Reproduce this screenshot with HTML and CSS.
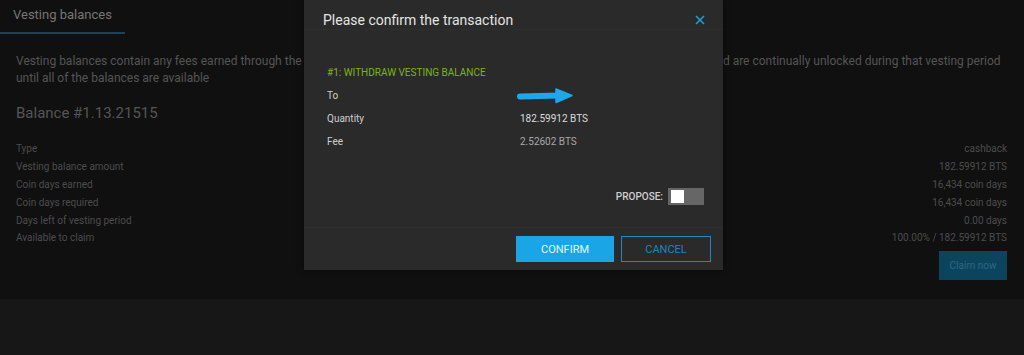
FILE: index.html
```html
<!DOCTYPE html>
<html lang="en">
<head>
    <meta charset="UTF-8">
    <title>Vesting balances</title>
    <link rel="stylesheet" href="styles.css">
</head>
<body>
    <div class="page">
        <div class="tabs">
            <div class="tab active">Vesting balances</div>
        </div>

        <div class="content">
            <p class="intro">Vesting balances contain any fees earned through the referral program or through lifetime membership upgrades for any accounts and are continually unlocked during that vesting period<br>until all of the balances are available</p>

            <h3 class="balance-title">Balance #1.13.21515</h3>

            <table class="balance-table">
                <tr><td>Type</td><td>cashback</td></tr>
                <tr><td>Vesting balance amount</td><td>182.59912 BTS</td></tr>
                <tr><td>Coin days earned</td><td>16,434 coin days</td></tr>
                <tr><td>Coin days required</td><td>16,434 coin days</td></tr>
                <tr><td>Days left of vesting period</td><td>0.00 days</td></tr>
                <tr><td>Available to claim</td><td>100.00% / 182.59912 BTS</td></tr>
            </table>

            <div class="claim-row">
                <button class="claim-btn">Claim now</button>
            </div>
        </div>
    </div>

    <div class="modal">
        <div class="modal-header">
            <h2>Please confirm the transaction</h2>
            <svg class="close-modal" width="10" height="10" viewBox="0 0 10 10">
                <path d="M1 1 L9 9 M9 1 L1 9" stroke="#1a9fdc" stroke-width="1.6" fill="none"/>
            </svg>
        </div>
        <div class="modal-body">
            <div class="op-title">#1: WITHDRAW VESTING BALANCE</div>
            <div class="op-row">
                <span class="op-label">To</span>
                <span class="op-value arrow">
                    <svg width="56" height="16" viewBox="0 0 56 16">
                        <path d="M3 8.5 L42 7.5" stroke="#1ba9e8" stroke-width="6" stroke-linecap="round" fill="none"/>
                        <path d="M39 1 L55 7.5 L39 14.5 Z" fill="#1ba9e8" stroke="#1ba9e8" stroke-width="1.5" stroke-linejoin="round"/>
                    </svg>
                </span>
            </div>
            <div class="op-row">
                <span class="op-label">Quantity</span>
                <span class="op-value bright">182.59912 BTS</span>
            </div>
            <div class="op-row">
                <span class="op-label">Fee</span>
                <span class="op-value">2.52602 BTS</span>
            </div>
            <div class="propose">
                <span>PROPOSE:</span>
                <span class="switch"><span class="knob"></span></span>
            </div>
        </div>
        <div class="modal-footer">
            <button class="btn confirm-btn">CONFIRM</button>
            <button class="btn cancel-btn">CANCEL</button>
        </div>
    </div>
</body>
</html>
```

FILE: styles.css
```css
body {
    font-family: Roboto, "Liberation Sans", sans-serif;
    margin: 0;
    padding: 0;
    background-color: #171717;
    height: 355px;
    overflow: hidden;
}
.page {
    background-color: #101010;
    height: 299px;
}
.tabs {
    height: 34px;
    display: flex;
}
.tab {
    font-size: 13px;
    color: #767676;
    padding: 7px 13px 0 13px;
    white-space: nowrap;
    border-bottom: 2px solid #1c435c;
    height: 25px;
}
.content {
    padding: 0 17px 0 16px;
}
.intro {
    font-size: 12px;
    line-height: 17px;
    color: #555555;
    margin: 19px 0 0 0;
    white-space: nowrap;
    overflow: hidden;
}
.balance-title {
    font-size: 15px;
    font-weight: normal;
    color: #555555;
    margin: 15px 0 0 0;
    line-height: 22px;
}
.balance-table {
    width: 100%;
    border-collapse: collapse;
    margin-top: 16px;
    font-size: 10px;
    color: #4c4c4c;
}
.balance-table td {
    padding: 0;
    height: 17.8px;
}
.balance-table td:last-child {
    text-align: right;
}
.claim-row {
    display: flex;
    justify-content: flex-end;
    margin-top: 4px;
}
.claim-btn {
    background-color: #0c445d;
    color: #2c6780;
    border: none;
    width: 68px;
    height: 29px;
    font-family: inherit;
    font-size: 10px;
    padding: 0;
}
.modal {
    position: absolute;
    top: 0;
    left: 304px;
    width: 419px;
    height: 270px;
    background-color: #2a2a2a;
    box-shadow: 0 0 6px rgba(0, 0, 0, 0.5);
    display: flex;
    flex-direction: column;
}
.modal-header {
    display: flex;
    justify-content: space-between;
    align-items: center;
    padding: 10px 18px 0 19px;
    height: 30px;
    box-sizing: border-box;
    margin-bottom: 10px;
    border-bottom: 1px solid #2e2e2e;
}
.modal-header h2 {
    margin: 0;
    font-size: 14px;
    font-weight: normal;
    color: #e4e4e4;
}
.close-modal {
    margin-top: 1px;
}
.modal-body {
    flex: 1;
    padding: 27px 19px 0 23px;
}
.op-title {
    font-size: 10px;
    color: #7cb51a;
    margin-bottom: 5px;
    line-height: 12px;
}
.op-row {
    display: flex;
    font-size: 10px;
    color: #cfcfcf;
    height: 23px;
    align-items: center;
}
.op-label {
    width: 193px;
}
.op-value {
    color: #a8a8a8;
    display: flex;
}
.op-value.arrow {
    margin-left: -3px;
}
.op-value.bright {
    color: #dcdcdc;
}
.propose {
    display: flex;
    justify-content: flex-end;
    align-items: center;
    gap: 5px;
    margin-top: 35px;
    font-size: 10px;
    font-weight: 500;
    color: #cfcfcf;
}
.switch {
    display: flex;
    align-items: center;
    width: 36px;
    height: 17px;
    background-color: #666666;
    box-sizing: border-box;
    padding-left: 3px;
}
.knob {
    width: 13px;
    height: 13px;
    background: #ffffff;
}
.modal-footer {
    border-top: 1px solid #2f2f2f;
    height: 43px;
    display: flex;
    justify-content: flex-end;
    align-items: flex-start;
    padding: 8px 12px 0 0;
    gap: 7px;
    box-sizing: border-box;
}
.btn {
    height: 26px;
    font-family: inherit;
    font-size: 11px;
    padding: 0;
    cursor: pointer;
}
.confirm-btn {
    width: 98px;
    background-color: #1aa5e6;
    border: none;
    color: #e8f6fd;
}
.cancel-btn {
    width: 90px;
    background: transparent;
    border: 1px solid #1a8ac0;
    color: #2384b3;
}
```
